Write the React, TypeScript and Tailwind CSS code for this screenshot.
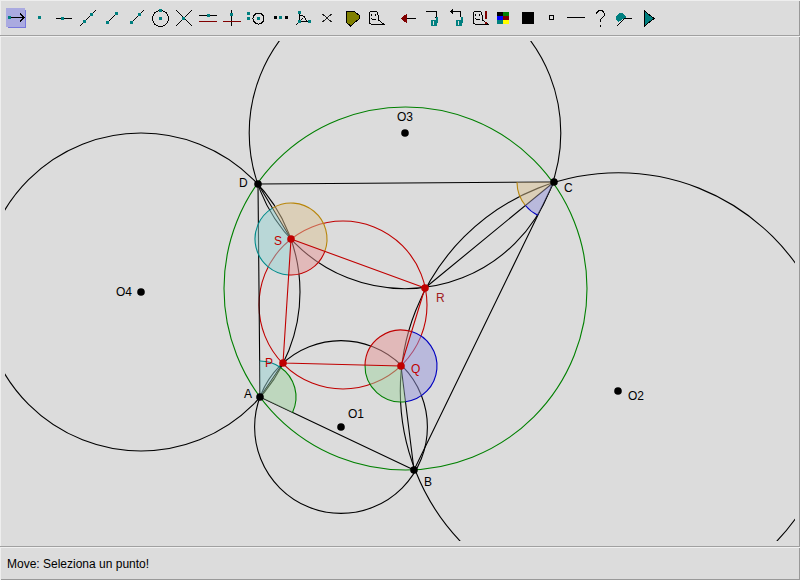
import React from 'react';

const teal = '#008080';
const maroon = '#800000';

// every icon is drawn in page coordinates, the viewBox is shifted per button
const Sq = ({ x, y, c = teal }: { x: number; y: number; c?: string }) => (
  <rect x={Math.floor(x) - 1} y={Math.floor(y) - 1} width={3} height={3} fill={c} />
);

const Ghost = ({ dx = 0 }: { dx?: number }) => (
  <g transform={`translate(${dx} 0)`}>
    <path d="M369 23V15Q369 11 373.5 11T378 15V19.5L384 24.5H372Z" fill="none" stroke="#000" />
    <rect x={371} y={14} width={1} height={2} fill="#000" />
    <rect x={375} y={14} width={1} height={2} fill="#000" />
    <path d="M371 18.5Q373 20.5 376 19" fill="none" stroke="#000" />
  </g>
);

const Bin = ({ x }: { x: number }) => (
  <g>
    <rect x={x} y={20} width={6} height={6} fill={teal} />
    <rect x={x + 2} y={21} width={1} height={4} fill="#dcdcdc" />
    <path d={`M${x + 6} 17V23`} stroke={teal} strokeWidth={2} />
  </g>
);

const L = ({ d, c = '#000' }: { d: string; c?: string }) => <path d={d} fill="none" stroke={c} />;

const tools: { x: number; node: React.ReactNode }[] = [
  { x: 4, node: <><rect x={8} y={10} width={18} height={18} fill="#7777dd" /><rect x={6} y={8} width={19} height={19} fill="#aaaae0" /><Sq x={9.5} y={17.5} /><L d="M11 17.5H24M20 13.5L24 17.5L20 21.5" /></> },
  { x: 28, node: <Sq x={39.5} y={17.5} /> },
  { x: 52, node: <><L d="M56 18.5H72" /><Sq x={62.5} y={18.5} /></> },
  { x: 76, node: <><L d="M80 26L96 10" /><Sq x={84.5} y={21.5} /><Sq x={91.5} y={14.5} /></> },
  { x: 100, node: <><L d="M108 22L116 14" /><Sq x={107.5} y={22.5} /><Sq x={116.5} y={13.5} /></> },
  { x: 124, node: <><L d="M132 22L144 10" /><Sq x={131.5} y={22.5} /><Sq x={139.5} y={14.5} /></> },
  { x: 148, node: <><circle cx={160.5} cy={18.5} r={8} fill="none" stroke="#000" /><Sq x={160.5} y={18.5} /><Sq x={160.5} y={10.5} /></> },
  { x: 172, node: <><L d="M176 10L192 26M192 10L176 26" /><Sq x={183.5} y={18.5} /></> },
  { x: 196, node: <><L d="M199 15.5H217" /><L d="M199 21.5H217" c={maroon} /><Sq x={208.5} y={15.5} /></> },
  { x: 220, node: <><L d="M231.5 10V26" /><L d="M223 21.5H241" c={maroon} /><Sq x={231.5} y={14.5} /></> },
  { x: 244, node: <><circle cx={258.5} cy={18.5} r={5.5} fill="none" stroke="#000" /><Sq x={258.5} y={18.5} /><Sq x={248.5} y={13.5} /><Sq x={248.5} y={18.5} /></> },
  { x: 268, node: <><Sq x={275.5} y={17.5} c="#000" /><Sq x={280.5} y={17.5} /><Sq x={286.5} y={17.5} c="#000" /></> },
  { x: 292, node: <><L d="M299.5 11V21.5H309M296 25L303 18M300 15Q305.5 16 306.5 21" /><Sq x={299.5} y={12.5} /><Sq x={299.5} y={21.5} /><Sq x={309.5} y={21.5} /></> },
  { x: 316, node: <L d="M322.5 14L331.5 22M331.5 14L322.5 22" c="#222" /> },
  { x: 340, node: <path d="M346.5 11.5H354L359.5 15.5V18.5L350.5 26L346.5 22.5Z" fill="#808000" stroke="#000" /> },
  { x: 364, node: <Ghost /> },
  { x: 396, node: <><L d="M406 18.5H416" /><path d="M401.5 18.5L406.5 14.5V22.5Z" fill={maroon} stroke={maroon} /></> },
  { x: 420, node: <><L d="M426 11.5H436.5V17" /><path d="M434 16.5H439L436.5 19.5Z" fill="#000" /><Bin x={431} /></> },
  { x: 444, node: <><L d="M452 11.5H460.5V17" /><path d="M453 9L450 11.5L453 14Z" fill="#000" /><Bin x={456} /></> },
  { x: 468, node: <><Ghost dx={104} /><rect x={485} y={11} width={2} height={8} fill={maroon} /><rect x={485} y={22} width={2} height={2} fill={maroon} /></> },
  { x: 492, node: <div /> },
  { x: 516, node: <rect x={522} y={12} width={12} height={12} fill="#000" /> },
  { x: 540, node: <rect x={549.5} y={15.5} width={4} height={4} fill="none" stroke="#000" /> },
  { x: 564, node: <L d="M567 17.5H585" /> },
  { x: 588, node: <L d="M596.5 14Q597 10.5 600.5 10.5T604.5 14.5Q604.5 16.5 602 18Q600.5 19 600.5 22M600.5 25V26.5" /> },
  { x: 612, node: <><L d="M622 18H632M617 26L624 19" /><path d="M618 22A5 5 0 1 1 626 17.5Z" fill={teal} /></> },
  { x: 636, node: <path d="M644.5 11L654 18.5L644.5 26Z" fill={teal} stroke="#000" /> },
];

const ColorGrid = () => (
  <svg width={24} height={24} viewBox="492 5 24 24" shapeRendering="crispEdges">
    <rect x={497} y={12} width={6} height={4} fill="#000" />
    <rect x={503} y={12} width={6} height={4} fill="#008000" />
    <rect x={497} y={16} width={6} height={4} fill="#0000ff" />
    <rect x={503} y={16} width={6} height={4} fill={maroon} />
    <rect x={497} y={20} width={6} height={4} fill={teal} />
    <rect x={503} y={20} width={6} height={4} fill="#ffff00" />
  </svg>
);

type Pt = [number, number];
const A: Pt = [260, 397];
const B: Pt = [414, 470];
const C: Pt = [554, 182];
const D: Pt = [258, 184];
const P: Pt = [283, 363];
const Q: Pt = [401, 366];
const R: Pt = [425, 288];
const S: Pt = [291, 239];

// pie slice round c, from the way to a over to the way to b
const sector = (c: Pt, a: Pt, b: Pt, r: number, sweep: 0 | 1) => {
  const p1 = Math.atan2(a[1] - c[1], a[0] - c[0]);
  const p2 = Math.atan2(b[1] - c[1], b[0] - c[0]);
  const x1 = c[0] + r * Math.cos(p1);
  const y1 = c[1] + r * Math.sin(p1);
  const x2 = c[0] + r * Math.cos(p2);
  const y2 = c[1] + r * Math.sin(p2);
  let delta = sweep ? p2 - p1 : p1 - p2;
  if (delta < 0) delta += Math.PI * 2;
  const large = delta > Math.PI ? 1 : 0;
  return {
    fill: `M${c[0]} ${c[1]}L${x1} ${y1}A${r} ${r} 0 ${large} ${sweep} ${x2} ${y2}Z`,
    arc: `M${x1} ${y1}A${r} ${r} 0 ${large} ${sweep} ${x2} ${y2}`,
  };
};

// tints are pale on purpose: the lines below them have to fade inside a slice
const tan = '#dac294';
const aqua = '#96d2d2';
const rose = '#e69696';
const lilac = '#9696dc';
const mint = '#a0d2a0';

const angles: { c: Pt; a: Pt; b: Pt; r: number; sweep: 0 | 1; color: string; tint: string }[] = [
  { c: S, a: D, b: R, r: 36, sweep: 1, color: '#b8860b', tint: tan },
  { c: S, a: P, b: D, r: 36, sweep: 1, color: '#008b8b', tint: aqua },
  { c: S, a: R, b: P, r: 36, sweep: 1, color: '#c00000', tint: rose },
  { c: Q, a: P, b: R, r: 36, sweep: 1, color: '#c00000', tint: rose },
  { c: Q, a: R, b: B, r: 36, sweep: 1, color: '#0000c0', tint: lilac },
  { c: Q, a: B, b: P, r: 36, sweep: 1, color: '#008000', tint: mint },
  { c: A, a: P, b: D, r: 36, sweep: 0, color: '#008b8b', tint: aqua },
  { c: A, a: P, b: B, r: 36, sweep: 1, color: '#008000', tint: mint },
  { c: C, a: R, b: D, r: 37, sweep: 1, color: '#b8860b', tint: tan },
  { c: C, a: B, b: R, r: 37, sweep: 1, color: '#0000c0', tint: lilac },
];

const seg = (a: Pt, b: Pt) => `M${a[0]} ${a[1]}L${b[0]} ${b[1]}`;

const circles: [number, number, number][] = [
  [341, 427, 86.4],
  [618.5, 391, 218.2],
  [405, 133, 155.8],
  [141, 292, 159],
];

const labels: { t: string; x: number; y: number; c?: string }[] = [
  { t: 'O3', x: 397, y: 121 },
  { t: 'D', x: 239, y: 187 },
  { t: 'C', x: 564, y: 192 },
  { t: 'S', x: 274, y: 245, c: '#c00000' },
  { t: 'R', x: 436, y: 302, c: '#a02020' },
  { t: 'O4', x: 116, y: 296 },
  { t: 'P', x: 265, y: 367, c: '#c00000' },
  { t: 'Q', x: 411, y: 373, c: '#c00000' },
  { t: 'A', x: 244, y: 398 },
  { t: 'O1', x: 348, y: 418 },
  { t: 'B', x: 424, y: 486 },
  { t: 'O2', x: 628, y: 400 },
];

export default function App() {
  return (
    <div className="w-[800px] h-[580px] flex flex-col bg-[#dcdcdc] overflow-hidden font-['Liberation_Sans',sans-serif] shadow-[inset_1px_1px_0_#eeeeee,inset_-1px_-1px_0_#999999]">
      <div className="h-[36px] shrink-0 flex items-start pt-[5px] pl-[4px] border-b border-[#a0a0a0]">
        {tools.map((t) => (
          <div key={t.x} className={t.x === 396 ? 'w-6 h-6 ml-2' : 'w-6 h-6'}>
            {t.x === 492 ? (
              <ColorGrid />
            ) : (
              <svg width={24} height={24} viewBox={`${t.x} 5 24 24`} overflow="visible" shapeRendering="crispEdges">
                {t.node}
              </svg>
            )}
          </div>
        ))}
      </div>

      <div className="flex-1 min-h-0 border-t border-[#f0f0f0]">
        <svg width={800} height={509} viewBox="0 37 800 509" className="block">
          <defs>
            <clipPath id="board">
              <rect x={5} y={41} width={790} height={500} />
            </clipPath>
          </defs>
          <g clipPath="url(#board)" fill="none" strokeWidth={1.1}>
            {circles.map(([x, y, r]) => (
              <circle key={x} cx={x} cy={y} r={r} stroke="#000" />
            ))}
            <circle cx={405.5} cy={288.5} r={181.5} stroke="#008000" />
            <circle cx={343} cy={305} r={84} stroke="#c00000" />
            <path d={seg(D, C) + seg(D, A) + seg(A, B) + seg(B, C)} stroke="#000" />
            <path d={seg(D, S) + seg(A, P) + seg(B, Q) + seg(C, R)} stroke="#000" />
            {angles.map((a, i) => (
              <path key={i} d={sector(a.c, a.a, a.b, a.r, a.sweep).fill} fill={a.tint} fillOpacity={0.5} stroke="none" />
            ))}
            {angles.map((a, i) => (
              <path key={i} d={sector(a.c, a.a, a.b, a.r, a.sweep).arc} stroke={a.color} />
            ))}
            <path d={seg(P, Q) + seg(Q, R) + seg(R, S) + seg(S, P)} stroke="#c00000" />
            {[A, B, C, D].map((p) => (
              <circle key={p[0]} cx={p[0]} cy={p[1]} r={3.8} fill="#000" stroke="none" />
            ))}
            {[[341, 427], [618, 391], [405, 133], [141, 292]].map((p) => (
              <circle key={p[0]} cx={p[0]} cy={p[1]} r={3.8} fill="#000" stroke="none" />
            ))}
            {[P, Q, R, S].map((p) => (
              <circle key={p[0]} cx={p[0]} cy={p[1]} r={3.8} fill="#c00000" stroke="none" />
            ))}
          </g>
          {labels.map((l) => (
            <text key={l.t} x={l.x} y={l.y} fontSize={12} fill={l.c ?? '#000'} fontFamily="Liberation Sans, sans-serif">
              {l.t}
            </text>
          ))}
        </svg>
      </div>

      <div className="h-[34px] shrink-0 border-t border-t-[#a0a0a0] shadow-[inset_0_1px_0_#f0f0f0] flex items-center pl-[7px] text-[12px] text-black">
        Move: Seleziona un punto!
      </div>
    </div>
  );
}
